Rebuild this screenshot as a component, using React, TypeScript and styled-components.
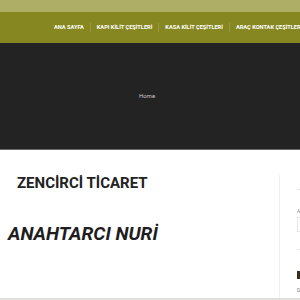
import styled, { createGlobalStyle } from "styled-components";

const GlobalStyle = createGlobalStyle`
    html, body {
        margin: 0;
        padding: 0;
        background: #fff;
        overflow: hidden;
    }
    body {
        font-family: Roboto, "Liberation Sans", sans-serif;
    }
`;

const Page = styled.div`
    width: 300px;
    height: 300px;
    overflow: hidden;
    display: flex;
    flex-direction: column;
    border-bottom: 2px solid #e2dfda;
    box-sizing: border-box;
`;

const TopBar = styled.div`
    height: 12px;
    background-color: #aeae66;
    flex-shrink: 0;
`;

const NavBar = styled.nav`
    height: 31px;
    background-color: #878721;
    display: flex;
    align-items: center;
    padding-left: 54px;
    white-space: nowrap;
    overflow: hidden;
    flex-shrink: 0;
`;

const NavItem = styled.a<{ $first?: boolean }>`
    color: #fff;
    font-size: 5.65px;
    font-weight: 700;
    text-decoration: none;
    padding: 0 6px;
    border-left: ${(p) => (p.$first ? "none" : "1px solid rgba(255, 255, 255, 0.15)")};
    padding-left: ${(p) => (p.$first ? "0" : "6px")};
    line-height: 9px;
`;

const Hero = styled.div`
    height: 106px;
    background-color: #232323;
    border-bottom: 1px solid #676767;
    display: flex;
    align-items: center;
    justify-content: center;
    flex-shrink: 0;
`;

const Crumb = styled.span`
    color: #c9c9c9;
    font-size: 6px;
    margin-left: -6px;
    margin-top: -1px;
`;

const Main = styled.div`
    display: flex;
    flex: 1;
    padding-top: 25px;
`;

const Content = styled.div`
    width: 279px;
    flex-shrink: 0;
    border-right: 1px solid #eeeeee;
`;

const Title = styled.h1`
    margin: 0 0 0 17px;
    font-size: 15px;
    font-weight: 700;
    color: #222;
    line-height: 17px;
`;

const Brand = styled.h2`
    margin: 31px 0 0 8px;
    font-size: 19px;
    font-style: italic;
    font-weight: 700;
    color: #1e1e1e;
    line-height: 22px;
`;

const Sidebar = styled.aside`
    padding-left: 17px;
    flex: 1;
    display: flex;
    flex-direction: column;
    overflow: hidden;
`;

const Rule = styled.div<{ $top: number }>`
    height: 1px;
    background: #e6e6e6;
    margin-top: ${(p) => p.$top}px;
`;

const Label = styled.div`
    font-size: 5px;
    color: #888;
    margin-top: 19px;
    line-height: 5px;
`;

const Input = styled.div`
    height: 13px;
    border: 1px solid #e6e6e6;
    border-right: none;
    margin-top: 3px;
`;

const WidgetTitle = styled.div`
    height: 8px;
    background: #3b2c1a;
    margin-top: 21px;
`;

const Small = styled.div`
    font-size: 5px;
    color: #777;
    line-height: 5px;
    margin-top: 9px;
`;

export default function App() {
    return (
        <Page>
            <GlobalStyle />
            <TopBar />
            <NavBar>
                <NavItem $first>ANA SAYFA</NavItem>
                <NavItem>KAPI KİLİT ÇEŞİTLERİ</NavItem>
                <NavItem>KASA KİLİT ÇEŞİTLERİ</NavItem>
                <NavItem>ARAÇ KONTAK ÇEŞİTLERİ</NavItem>
            </NavBar>
            <Hero>
                <Crumb>Home</Crumb>
            </Hero>
            <Main>
                <Content>
                    <Title>ZENCİRCİ TİCARET</Title>
                    <Brand>ANAHTARCI NURİ</Brand>
                </Content>
                <Sidebar>
                    <Rule $top={14} />
                    <Label>A</Label>
                    <Input />
                    <Rule $top={17} />
                    <WidgetTitle />
                    <Small>D</Small>
                </Sidebar>
            </Main>
        </Page>
    );
}
